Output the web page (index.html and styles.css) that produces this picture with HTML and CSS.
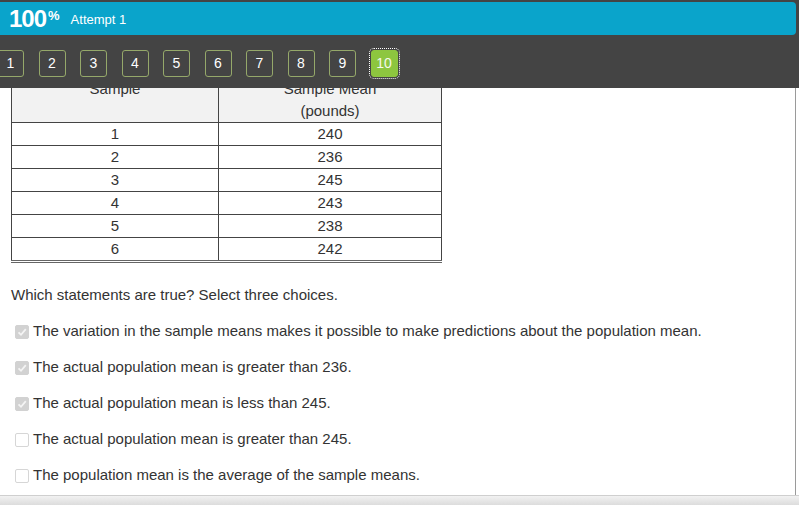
FILE: index.html
```html
<!DOCTYPE html>
<html>
<head>
<meta charset="utf-8">
<link rel="stylesheet" href="styles.css">
</head>
<body>
<div class="top">
  <div class="bar">
    <span class="score">100<sup>%</sup></span>
    <span class="attempt">Attempt 1</span>
  </div>
</div>
<div class="nav">
  <div class="nav-list">
    <span class="qbtn">1</span>
    <span class="qbtn">2</span>
    <span class="qbtn">3</span>
    <span class="qbtn">4</span>
    <span class="qbtn">5</span>
    <span class="qbtn">6</span>
    <span class="qbtn">7</span>
    <span class="qbtn">8</span>
    <span class="qbtn">9</span>
    <span class="qbtn current">10</span>
  </div>
</div>
<div class="content">
  <div class="inner">
    <table class="data">
      <thead>
        <tr><th>Sample</th><th>Sample Mean<br>(pounds)</th></tr>
      </thead>
      <tbody>
        <tr><td>1</td><td>240</td></tr>
        <tr><td>2</td><td>236</td></tr>
        <tr><td>3</td><td>245</td></tr>
        <tr><td>4</td><td>243</td></tr>
        <tr><td>5</td><td>238</td></tr>
        <tr><td>6</td><td>242</td></tr>
      </tbody>
    </table>
    <p class="question">Which statements are true? Select three choices.</p>
    <ul class="choices">
      <li class="choice"><span class="box checked"><svg viewBox="0 0 12 12" width="12" height="12"><path d="M2.5 6.3 L5 8.8 L9.8 3.2" fill="none" stroke="#f4f4f4" stroke-width="1.8"/></svg></span>The variation in the sample means makes it possible to make predictions about the population mean.</li>
      <li class="choice"><span class="box checked"><svg viewBox="0 0 12 12" width="12" height="12"><path d="M2.5 6.3 L5 8.8 L9.8 3.2" fill="none" stroke="#f4f4f4" stroke-width="1.8"/></svg></span>The actual population mean is greater than 236.</li>
      <li class="choice"><span class="box checked"><svg viewBox="0 0 12 12" width="12" height="12"><path d="M2.5 6.3 L5 8.8 L9.8 3.2" fill="none" stroke="#f4f4f4" stroke-width="1.8"/></svg></span>The actual population mean is less than 245.</li>
      <li class="choice"><span class="box"></span>The actual population mean is greater than 245.</li>
      <li class="choice"><span class="box"></span>The population mean is the average of the sample means.</li>
    </ul>
  </div>
</div>
<div class="footer"></div>
</body>
</html>
```
FILE: styles.css
```css
html, body {
  margin: 0;
  padding: 0;
}
body {
  width: 799px;
  height: 505px;
  overflow: hidden;
  background: #fff;
  font-family: "Liberation Sans", Arial, sans-serif;
  color: #333;
}
.top {
  background: #444;
  padding-top: 2px;
}
.bar {
  height: 33px;
  margin-right: 3px;
  background: #0aa4cb;
  border-radius: 0 4px 4px 0;
  display: flex;
  align-items: center;
  padding-left: 9px;
  color: #fff;
}
.score {
  font-size: 24px;
  font-weight: bold;
  letter-spacing: -1px;
  line-height: 24px;
}
.score sup {
  font-size: 13px;
  font-weight: bold;
  letter-spacing: 0;
  vertical-align: top;
  position: relative;
  top: -3px;
  margin-left: 2px;
}
.attempt {
  font-size: 13px;
  margin-left: 11px;
  margin-top: 1px;
}
.nav {
  background: #444;
  height: 53px;
  display: flex;
  align-items: center;
}
.nav-list {
  display: flex;
  gap: 14.5px;
  margin-left: -3px;
  margin-top: 3px;
}
.qbtn {
  width: 25px;
  height: 25px;
  border: 1px solid #95a86a;
  border-radius: 3px;
  color: #fff;
  font-size: 14px;
  display: flex;
  align-items: center;
  justify-content: center;
}
.qbtn.current {
  background: #8dc63f;
  border-color: #8dc63f;
  color: #f4f9ec;
  outline: 1px dotted #fff;
  outline-offset: 1px;
}
.content {
  height: 407px;
  overflow: hidden;
  border-right: 1px solid #9a9a9a;
  width: 795px;
}
.inner {
  padding-left: 11px;
  margin-top: -13px;
}
.data {
  border-collapse: collapse;
  width: 431px;
  font-size: 15px;
  color: #333;
  border-bottom: 3px double #666;
}
.data th, .data td {
  border: 1px solid #444;
  text-align: center;
  font-weight: normal;
}
.data th {
  background: #f2f2f2;
  line-height: 22px;
  padding: 2px 4px 0;
  vertical-align: top;
}
.data th:first-child {
  width: 198px;
}
.data td {
  height: 22px;
  line-height: 20px;
  padding: 0 4px;
}
.question {
  font-size: 15px;
  margin: 23px 0 0;
  line-height: 18px;
}
.choices {
  list-style: none;
  margin: 18px 0 0;
  padding: 0;
}
.choice {
  font-size: 15px;
  line-height: 18px;
  height: 36px;
  display: flex;
  align-items: flex-start;
}
.box {
  width: 12px;
  height: 12px;
  margin: 3px 4px 0 4px;
  border: 1px solid #d6d6d6;
  border-radius: 2px;
  background: #fff;
  display: flex;
  align-items: center;
  justify-content: center;
  flex: none;
}
.box.checked {
  background: #d2d2d2;
  border-color: #d2d2d2;
}
.footer {
  height: 9px;
  border-top: 1px solid #cfcfcf;
  background: linear-gradient(#f2f2f2, #dcdcdc);
}
```
